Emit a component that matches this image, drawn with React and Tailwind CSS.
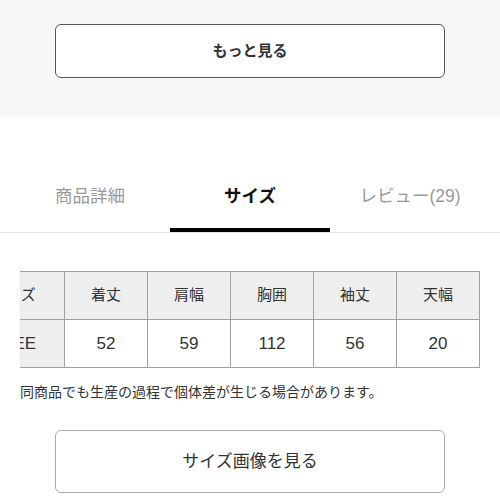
import React from 'react';

const cols = ['着丈', '肩幅', '胸囲', '袖丈', '天幅'];
const vals = ['52', '59', '112', '56', '20'];

export default function App() {
  const [tab, setTab] = React.useState('size');
  const font = { fontFamily: '"Liberation Sans", "Noto Sans CJK JP", sans-serif' };
  const cell = 'text-center border-[1.5px] border-[#a0a0a0]';
  return (
    <div className="w-[500px] h-[500px] overflow-hidden bg-white text-[#333]" style={font}>
      <div className="bg-[#f7f7f7] h-[116px] pt-[24px] flex justify-center">
        <button className="w-[390px] h-[54px] bg-white border-[1.5px] border-[#555] rounded-[6px] text-[15px] font-bold text-[#333]">
          もっと見る
        </button>
      </div>

      <div className="pt-[62px] border-b border-[#e5e5e5] flex px-[10px]">
        {[
          ['detail', '商品詳細'],
          ['size', 'サイズ'],
          ['review', 'レビュー(29)'],
        ].map(([k, label]) => (
          <button
            key={k}
            onClick={() => setTab(k)}
            className={`w-[160px] h-[54px] pb-[14px] text-[17.5px] border-b-4 ${
              tab === k ? 'border-black text-[#111] font-bold' : 'border-transparent text-[#999]'
            }`}
          >
            {label}
          </button>
        ))}
      </div>

      <div className="ml-[20px] mt-[38px] w-[460px] overflow-hidden">
        <table className="-ml-[58px] w-[517px] table-fixed border-collapse text-[15px] text-[#333]">
          <colgroup>
            <col className="w-[102px]" />
            {cols.map((c) => (
              <col key={c} className="w-[83px]" />
            ))}
          </colgroup>
          <tbody>
            <tr className="h-[48px] bg-[#eeeeee]">
              <td className={cell}>サイズ</td>
              {cols.map((c) => (
                <td key={c} className={cell}>{c}</td>
              ))}
            </tr>
            <tr className="h-[48px] text-[17px]">
              <td className={`${cell} bg-[#eeeeee]`}>FREE</td>
              {vals.map((v, i) => (
                <td key={i} className={`${cell} bg-white`}>{v}</td>
              ))}
            </tr>
          </tbody>
        </table>
      </div>

      <p className="ml-[20px] mt-[14px] text-[14px] text-[#333] leading-[20px]">
        同商品でも生産の過程で個体差が生じる場合があります。
      </p>

      <div className="flex justify-center mt-[28px]">
        <button className="w-[390px] h-[63px] bg-white border-[1.5px] border-[#aaa] rounded-[6px] text-[17px] text-[#333]">
          サイズ画像を見る
        </button>
      </div>
    </div>
  );
}
